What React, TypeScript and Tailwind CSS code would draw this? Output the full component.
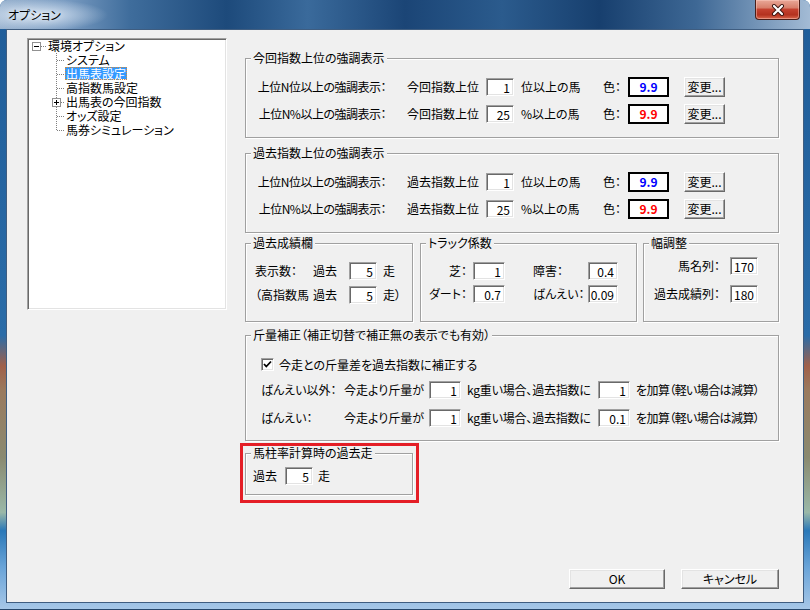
import React from 'react';

const SUNKEN =
  'border border-t-[#a0a0a0] border-l-[#a0a0a0] border-b-white border-r-white shadow-[inset_1px_1px_0_#696969,inset_-1px_-1px_0_#e3e3e3]';
const RAISED =
  'border border-t-white border-l-white border-b-[#696969] border-r-[#696969] shadow-[inset_-1px_-1px_0_#a0a0a0,inset_1px_1px_0_#e3e3e3] bg-[#f0f0f0]';

function Edit({ value, className }: { value: string; className: string }) {
  return (
    <input
      readOnly
      value={value}
      className={`h-[18px] shrink-0 bg-white pr-[3px] text-right text-[12px] outline-none ${SUNKEN} ${className}`}
    />
  );
}

function Btn({ children, className }: { children: React.ReactNode; className: string }) {
  return (
    <button className={`flex shrink-0 items-center justify-center text-[12px] ${RAISED} ${className}`}>
      {children}
    </button>
  );
}

function Group({
  title,
  className,
  children,
}: {
  title: string;
  className: string;
  children?: React.ReactNode;
}) {
  return (
    <div
      className={`relative shrink-0 border border-[#a0a0a0] shadow-[inset_1px_1px_0_#fff,1px_1px_0_#fff] ${className}`}
    >
      <span className="absolute -top-[8px] left-[5px] whitespace-nowrap bg-[#f0f0f0] px-[2px] leading-[14px]">
        {title}
      </span>
      {children}
    </div>
  );
}

function RankRow({
  label,
  prefix,
  value,
  suffix,
  color,
}: {
  label: string;
  prefix: string;
  value: string;
  suffix: string;
  color: string;
}) {
  return (
    <div className="flex h-[20px] items-center whitespace-nowrap">
      <span className="w-[140px] text-right tracking-[-0.5px]">{label}</span>
      <span className="ml-[21px] w-[79px]">{prefix}</span>
      <Edit value={value} className="w-[28px]" />
      <span className="ml-[7px] w-[82px]">{suffix}</span>
      <span className="w-[25px]">色：</span>
      <div
        className={`flex h-[20px] w-[41px] items-center justify-center border-2 border-black bg-white font-bold ${color}`}
      >
        9.9
      </div>
      <Btn className="ml-[15px] h-[20px] w-[41px]">変更...</Btn>
    </div>
  );
}

function RankGroup({ title, prefix, className }: { title: string; prefix: string; className: string }) {
  return (
    <Group title={title} className={`h-[80px] w-full ${className}`}>
      <div className="flex flex-col gap-[7px] pt-[18px]">
        <RankRow label="上位N位以上の強調表示：" prefix={prefix} value="1" suffix="位以上の馬" color="text-[#0000ff]" />
        <RankRow label="上位N%以上の強調表示：" prefix={prefix} value="25" suffix="%以上の馬" color="text-[#ff0000]" />
      </div>
    </Group>
  );
}

const treeItems = [
  { label: 'システム' },
  { label: '出馬表設定', selected: true },
  { label: '高指数馬設定' },
  { label: '出馬表の今回指数' },
  { label: 'オッズ設定' },
  { label: '馬券シミュレーション' },
];

function Tree() {
  return (
    <div className={`relative ml-[20px] mt-[8px] h-[272px] w-[200px] shrink-0 bg-white ${SUNKEN}`}>
      <svg className="absolute left-0 top-0" width="60" height="100" shapeRendering="crispEdges">
        <g stroke="#808080" strokeDasharray="1 1">
          <line x1="13" y1="7.5" x2="19" y2="7.5" />
          <line x1="28.5" y1="14" x2="28.5" y2="92" />
          {[21, 35, 49, 63, 77, 91].map((y) => (
            <line key={y} x1="29" y1={y + 0.5} x2="37" y2={y + 0.5} />
          ))}
        </g>
        <rect x="4.5" y="3.5" width="8" height="8" fill="#fff" stroke="#919191" />
        <line x1="6" y1="7.5" x2="11" y2="7.5" stroke="#000" />
        <rect x="24.5" y="59.5" width="8" height="8" fill="#fff" stroke="#919191" />
        <line x1="26" y1="63.5" x2="31" y2="63.5" stroke="#000" />
        <line x1="28.5" y1="61" x2="28.5" y2="66" stroke="#000" />
      </svg>
      <div className="flex flex-col leading-[14px]">
        <div className="h-[14px] pl-[19px]">
          <span className="px-[1px]">環境オプション</span>
        </div>
        {treeItems.map((it) => (
          <div key={it.label} className="h-[14px] pl-[37px]">
            {it.selected ? (
              <span className="inline-block h-[13px] bg-[#3399ff] px-[1px] leading-[13px] text-white outline-1 -outline-offset-1 outline-dotted outline-[#d08a3a]">
                {it.label}
              </span>
            ) : (
              <span className="px-[1px]">{it.label}</span>
            )}
          </div>
        ))}
      </div>
    </div>
  );
}

export default function App() {
  return (
    <div className="relative flex h-[610px] w-[810px] flex-col overflow-hidden rounded-t-[7px] bg-[linear-gradient(180deg,#1f5c98_0%,#2a6ca8_55%,#a0604a_60%,#9a7a5e_64%,#8a8a70_75%,#9ab8a8_84%,#2a78b8_87%,#6aa4d8_93%,#a8c8e8_100%)] font-['Noto_Sans_CJK_JP',sans-serif] text-[12px] leading-[14px] text-black [font-feature-settings:'palt']">
      {/* title bar */}
      <div className="flex h-[29px] shrink-0 items-start bg-[radial-gradient(ellipse_70px_16px_at_38px_15px,rgba(225,236,248,0.9),rgba(225,236,248,0)_100%),linear-gradient(90deg,#9ab3cf_0%,#7a9cc2_8%,#3f6d9c_16%,#1d4a7b_28%,#3a6a9b_38%,#1b4576_50%,#2b5b8d_62%,#173f6e_74%,#3e6895_86%,#a3bbd5_100%)]">
        <span className="ml-[8px] mt-[8px] whitespace-nowrap [text-shadow:0_0_6px_rgba(255,255,255,0.9)]">オプション</span>
        <div className="ml-auto mr-[10px] flex h-[20px] w-[45px] items-center justify-center rounded-b-[4px] border border-t-0 border-[#4a1e18] bg-[linear-gradient(180deg,#e9a898_0%,#d8806c_40%,#c4412f_50%,#b4321f_78%,#d9674d_100%)] shadow-[inset_0_0_0_1px_rgba(255,210,200,0.45)]">
          <svg width="14" height="12" viewBox="0 0 14 12">
            <path d="M3 2 L11 10 M11 2 L3 10" stroke="#3a1510" strokeWidth="4" strokeLinecap="round" />
            <path d="M3 2 L11 10 M11 2 L3 10" stroke="#fff" strokeWidth="2.2" strokeLinecap="round" />
          </svg>
        </div>
      </div>

      {/* client area */}
      <div className="mx-[6px] flex h-[574px] shrink-0 items-start border border-[#3f5d80] bg-[#f0f0f0]">
        <Tree />

        <div className="ml-[18px] flex w-[534px] shrink-0 flex-col pt-[28px]">
          <RankGroup title="今回指数上位の強調表示" prefix="今回指数上位" className="" />
          <RankGroup title="過去指数上位の強調表示" prefix="過去指数上位" className="mt-[15px]" />

          <div className="mt-[10px] flex h-[79px] whitespace-nowrap">
            <Group title="過去成績欄" className="h-full w-[168px]">
              <div className="flex flex-col gap-[6px] pl-[9px] pt-[18px]">
                <div className="flex h-[18px] items-center">
                  <span className="w-[58px]">表示数：</span>
                  <span className="w-[36px]">過去</span>
                  <Edit value="5" className="w-[28px]" />
                  <span className="ml-[6px]">走</span>
                </div>
                <div className="flex h-[18px] items-center">
                  <span className="w-[58px]">（高指数馬</span>
                  <span className="w-[36px]">過去</span>
                  <Edit value="5" className="w-[28px]" />
                  <span className="ml-[6px]">走）</span>
                </div>
              </div>
            </Group>

            <Group title="トラック係数" className="ml-[7px] h-full w-[217px]">
              <div className="flex flex-col gap-[5px] pt-[18px]">
                <div className="flex h-[18px] items-center">
                  <span className="w-[46px] text-right">芝：</span>
                  <Edit value="1" className="ml-[6px] w-[32px]" />
                  <span className="ml-[28px] w-[55px]">障害：</span>
                  <Edit value="0.4" className="w-[30px]" />
                </div>
                <div className="flex h-[18px] items-center">
                  <span className="w-[46px] text-right">ダート：</span>
                  <Edit value="0.7" className="ml-[6px] w-[32px]" />
                  <span className="ml-[28px] w-[55px]">ばんえい：</span>
                  <Edit value="0.09" className="w-[30px]" />
                </div>
              </div>
            </Group>

            <Group title="幅調整" className="ml-[6px] h-full w-[136px]">
              <div className="flex flex-col gap-[10px] pt-[13px]">
                <div className="flex h-[18px] items-center">
                  <span className="w-[76px] text-right">馬名列：</span>
                  <Edit value="170" className="ml-[10px] w-[28px]" />
                </div>
                <div className="flex h-[18px] items-center">
                  <span className="w-[76px] text-right">過去成績列：</span>
                  <Edit value="180" className="ml-[10px] w-[28px]" />
                </div>
              </div>
            </Group>
          </div>

          <Group title="斤量補正（補正切替で補正無の表示でも有効）" className="mt-[13px] h-[106px] w-full">
            <div className="flex flex-col whitespace-nowrap pl-[15px]">
              <div className="mt-[22px] flex h-[13px] items-center">
                <span className={`flex h-[13px] w-[13px] shrink-0 items-center justify-center bg-white ${SUNKEN}`}>
                  <svg width="9" height="9" viewBox="0 0 9 9">
                    <path d="M1 4 L3.3 6.5 L8 1.5" fill="none" stroke="#000" strokeWidth="1.8" />
                  </svg>
                </span>
                <span className="ml-[5px]">今走との斤量差を過去指数に補正する</span>
              </div>
              {[
                { a: 'ばんえい以外：', v1: '1', v2: '1' },
                { a: 'ばんえい：', v1: '1', v2: '0.1' },
              ].map((r) => (
                <div key={r.a} className="mt-[10px] flex h-[18px] items-center">
                  <span className="w-[83px]">{r.a}</span>
                  <span className="w-[85px]">今走より斤量が</span>
                  <Edit value={r.v1} className="w-[32px]" />
                  <span className="ml-[6px] w-[131px] tracking-[-0.2px]">kg重い場合、過去指数に</span>
                  <Edit value={r.v2} className="w-[32px]" />
                  <span className="ml-[6px] tracking-[-0.6px]">を加算（軽い場合は減算）</span>
                </div>
              ))}
            </div>
          </Group>

          <div className="-ml-[5px] mt-[2px] h-[60px] w-[179px] border-[3px] border-[#e41e26] pl-[2px] pt-[7px]">
            <Group title="馬柱率計算時の過去走" className="h-[42px] w-[168px]">
              <div className="mt-[13px] flex h-[18px] items-center pl-[7px]">
                <span className="w-[32px]">過去</span>
                <Edit value="5" className="w-[28px]" />
                <span className="ml-[5px]">走</span>
              </div>
            </Group>
          </div>

          <div className="mt-[66px] flex justify-end gap-[16px]">
            <Btn className="h-[20px] w-[96px]">OK</Btn>
            <Btn className="h-[20px] w-[98px]">キャンセル</Btn>
          </div>
        </div>
      </div>

      {/* bottom frame edge */}
      <div className="mt-auto h-[1px] bg-[#27476b]" />
    </div>
  );
}
